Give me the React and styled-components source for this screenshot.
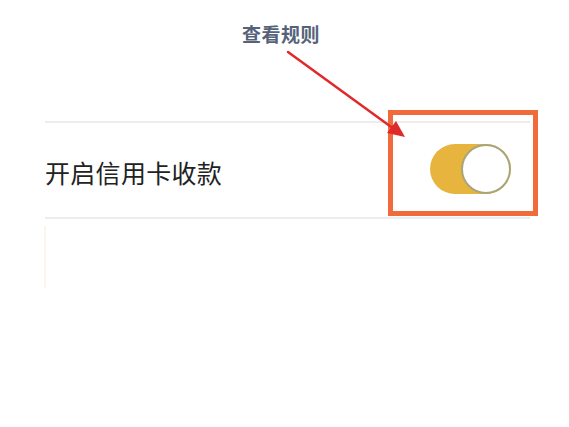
import React from "react";
import styled, { createGlobalStyle } from "styled-components";

const Global = createGlobalStyle`
  html, body { margin: 0; padding: 0; background: #ffffff; }
  body { width: 569px; height: 427px; overflow: hidden; font-family: "Noto Sans CJK SC", "Noto Sans", sans-serif; }
`;

const Page = styled.div`
  position: relative;
  width: 569px;
  height: 427px;
  background: #ffffff;
  padding-top: 121px;
  box-sizing: border-box;
`;

const SettingRow = styled.div`
  margin-left: 45px;
  width: 485px;
  height: 94px;
  border-top: 2px solid #ececec;
  border-bottom: 2px solid #ececec;
  display: flex;
  align-items: center;
  justify-content: space-between;
`;

const Label = styled.span`
  font-size: 25px;
  color: #222222;
  letter-spacing: 0.3px;
  margin-top: 4px;
`;

const Track = styled.div`
  width: 81px;
  height: 50px;
  border-radius: 25px;
  background: ${(p) => (p.$on ? "#e7b53d" : "#e5e5e5")};
  display: flex;
  align-items: center;
  justify-content: ${(p) => (p.$on ? "flex-end" : "flex-start")};
  margin-right: 19px;
  margin-top: -2px;
`;

const Knob = styled.div`
  width: 46px;
  height: 46px;
  border-radius: 50%;
  background: #ffffff;
  border: 2px solid #a9a57a;
`;

const Callout = styled.div`
  position: absolute;
  left: 242px;
  top: 20px;
  font-size: 19px;
  font-weight: 700;
  color: #56627a;
  letter-spacing: 0.5px;
`;

const Highlight = styled.div`
  position: absolute;
  left: 388px;
  top: 110px;
  width: 150px;
  height: 106px;
  box-sizing: border-box;
  border: 5px solid #f06a3c;
`;

const ArrowSvg = styled.svg`
  position: absolute;
  left: 0;
  top: 0;
  pointer-events: none;
`;

const FaintMark = styled.div`
  position: absolute;
  left: 44px;
  top: 226px;
  width: 2px;
  height: 62px;
  background: #fbf7ea;
`;

export default function App() {
  return (
    <>
      <Global />
      <Page>
        <SettingRow>
          <Label>开启信用卡收款</Label>
          <Track $on>
            <Knob />
          </Track>
        </SettingRow>
        <FaintMark />
        <Highlight />
        <Callout>查看规则</Callout>
        <ArrowSvg width="569" height="427" viewBox="0 0 569 427">
          <line x1="288" y1="52" x2="394" y2="129" stroke="#e0292b" strokeWidth="2.5" strokeLinecap="round" />
          <polygon points="405,137 387,133 396,121" fill="#e0292b" />
        </ArrowSvg>
      </Page>
    </>
  );
}
